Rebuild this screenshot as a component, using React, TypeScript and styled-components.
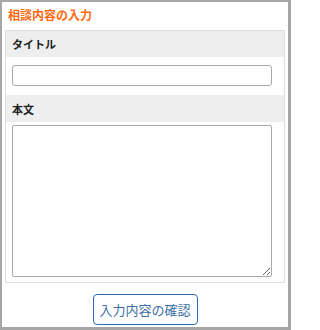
import styled, { createGlobalStyle } from "styled-components";

const GlobalStyle = createGlobalStyle`
  html, body {
    margin: 0;
    padding: 0;
    background: #fff;
  }
  body {
    font-family: "Noto Sans CJK JP", "Noto Sans", sans-serif;
  }
`;

const Frame = styled.div`
  box-sizing: border-box;
  width: 291px;
  height: 330px;
  border: 2px solid #a6a6a6;
  border-right-width: 3px;
  border-bottom-width: 3px;
  display: flex;
  flex-direction: column;
  align-items: center;
`;

const Title = styled.h2`
  align-self: stretch;
  box-sizing: border-box;
  height: 28px;
  margin: 0;
  padding: 5px 0 0 6px;
  font-size: 12px;
  line-height: 16px;
  font-weight: bold;
  color: #ff6a10;
`;

const Panel = styled.div`
  box-sizing: border-box;
  width: 280px;
  border: 1px solid #dddddd;
  display: flex;
  flex-direction: column;
`;

const Label = styled.div<{ $h: number }>`
  box-sizing: border-box;
  height: ${(p) => p.$h}px;
  padding: 0 6px;
  display: flex;
  align-items: center;
  background: #eeeeee;
  font-size: 11px;
  font-weight: bold;
  color: #222;
`;

const Field = styled.div<{ $top: number; $bottom: number }>`
  padding: ${(p) => p.$top}px 6px ${(p) => p.$bottom}px 6px;
  display: flex;
`;

const TextInput = styled.input`
  box-sizing: border-box;
  width: 260px;
  height: 21px;
  margin: 0;
  border: 1px solid #a9a9a9;
  border-radius: 3px;
  outline: none;
  font-family: inherit;
  font-size: 12px;
`;

const TextArea = styled.textarea`
  box-sizing: border-box;
  width: 260px;
  height: 152px;
  margin: 0;
  border: 1px solid #a9a9a9;
  border-radius: 2px;
  outline: none;
  font-family: inherit;
  font-size: 12px;
`;

const ConfirmButton = styled.button`
  box-sizing: border-box;
  margin-top: 11px;
  width: 105px;
  height: 31px;
  padding: 0;
  background: #fff;
  border: 1px solid #2f69ad;
  border-radius: 4px;
  color: #3a6ea8;
  font-family: inherit;
  font-size: 13px;
  cursor: pointer;
`;

export default function App() {
  return (
    <>
      <GlobalStyle />
      <Frame>
        <Title>相談内容の入力</Title>
        <Panel>
          <Label $h={26}>タイトル</Label>
          <Field $top={8} $bottom={9}>
            <TextInput type="text" />
          </Field>
          <Label $h={27}>本文</Label>
          <Field $top={3} $bottom={5}>
            <TextArea />
          </Field>
        </Panel>
        <ConfirmButton type="button">入力内容の確認</ConfirmButton>
      </Frame>
    </>
  );
}
